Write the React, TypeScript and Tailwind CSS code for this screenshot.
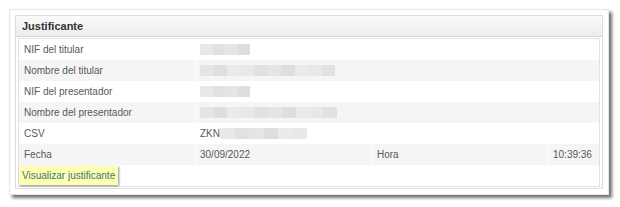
import React from 'react'

const font = { fontFamily: '"Liberation Sans", Arial, sans-serif' }

function Blur({ w, tint = false }: { w: number; tint?: boolean }) {
  // blurred/pixelated value, as in the capture
  const parts = Math.max(1, Math.round(w / 14))
  return (
    <span className="inline-flex h-[11px]" style={{ width: w }}>
      {Array.from({ length: parts }).map((_, i) => (
        <span
          key={i}
          className="h-full flex-1"
          style={{ backgroundColor: ['#e8e8e8', '#e1e1e1', '#e5e5e5', '#dedede', '#eaeaea'][(i + (tint ? 2 : 0)) % 5] }}
        />
      ))}
    </span>
  )
}

function Row({ label, alt, children }: { label: string; alt?: boolean; children?: React.ReactNode }) {
  return (
    <div className={`flex h-[21px] items-center ${alt ? 'bg-[#f5f5f5]' : 'bg-white'}`}>
      <div className="flex h-full w-[177px] items-center border-r border-white pl-[5px]">{label}</div>
      <div className="flex h-full flex-1 items-center pl-[4px]">{children}</div>
    </div>
  )
}

export default function App() {
  return (
    <div className="h-[207px] w-[620px] bg-white pl-[9px] pt-[9px]" style={font}>
      <div className="w-[600px] border border-[#e6e6e6] bg-white p-[5px] shadow-[3px_3px_3px_rgba(0,0,0,0.55)]">
        <div className="flex flex-col border border-[#dcdcdc]">
          {/* cabecera */}
          <div className="flex h-[21px] items-center border-b border-[#d6d6d6] bg-gradient-to-b from-[#fbfbfb] to-[#ececec] px-[6px] pt-[1px] text-[11px] font-bold text-[#333]">
            Justificante
          </div>
          <div className="px-[2px] py-[1px]">
            <div className="border border-[#e2e2e2] text-[10px] text-[#585858]">
              <Row label="NIF del titular">
                <Blur w={50} />
              </Row>
              <Row label="Nombre del titular" alt>
                <Blur w={135} tint />
              </Row>
              <Row label="NIF del presentador">
                <Blur w={50} />
              </Row>
              <Row label="Nombre del presentador" alt>
                <Blur w={137} tint />
              </Row>
              <Row label="CSV">
                <span>ZKN</span>
                <Blur w={87} />
              </Row>
              <div className="flex h-[21px] items-center bg-[#f5f5f5]">
                <div className="flex h-full w-[177px] items-center border-r border-white pl-[5px]">Fecha</div>
                <div className="flex h-full w-[177px] items-center border-r border-white pl-[4px]">30/09/2022</div>
                <div className="flex h-full w-[176px] items-center border-r border-white pl-[4px]">Hora</div>
                <div className="flex h-full flex-1 items-center pl-[4px]">10:39:36</div>
              </div>
              <div className="flex h-[21px] items-center">
                <span className="bg-[#ffffb4] px-[3px] py-[2px] text-[#3a7872] shadow-[1px_1px_2px_rgba(0,0,0,0.45)]">
                  Visualizar justificante
                </span>
              </div>
            </div>
          </div>
        </div>
      </div>
    </div>
  )
}
